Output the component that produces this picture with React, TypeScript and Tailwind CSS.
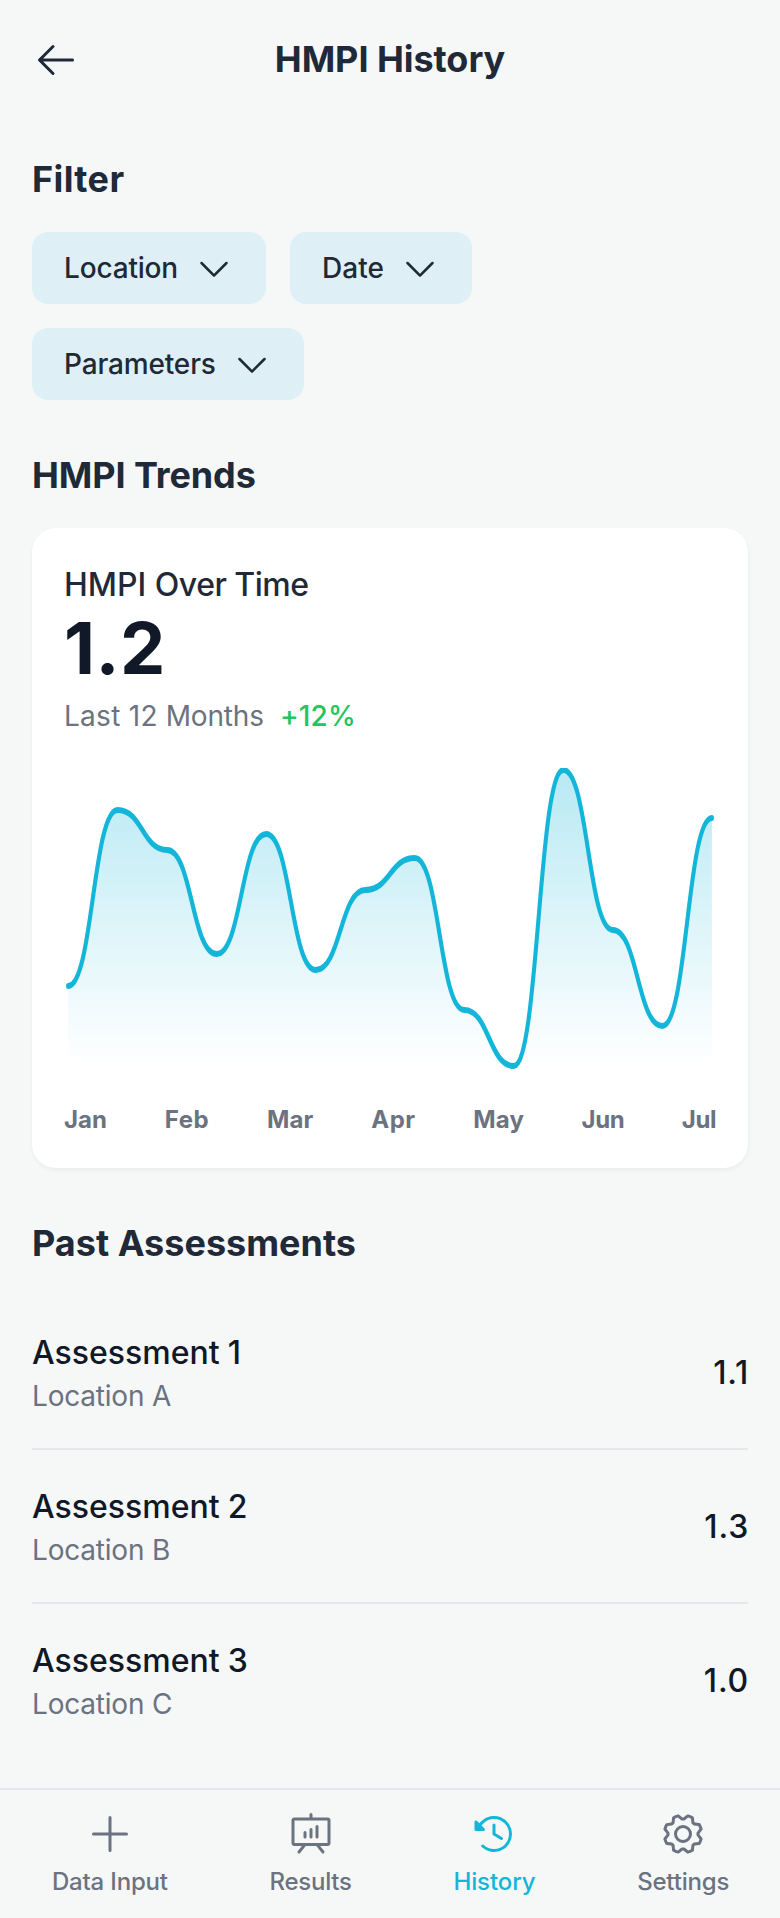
import {
  PiArrowLeft,
  PiCaretDown,
  PiClockCounterClockwiseFill,
  PiGear,
  PiPlus,
  PiPresentationChart,
} from "react-icons/pi";

const filters = [
  { name: "Location", tracking: "tracking-[-0.175px]" },
  { name: "Date", tracking: "tracking-[0.05px]" },
  { name: "Parameters", tracking: "tracking-[-0.15px]" },
];
const months = [
  { name: "Jan", tracking: "tracking-[0.06px]" },
  { name: "Feb", tracking: "tracking-[0.6px]" },
  { name: "Mar", tracking: "tracking-[0.2px]" },
  { name: "Apr", tracking: "tracking-[0.6px]" },
  { name: "May", tracking: "tracking-[0.1px]" },
  { name: "Jun", tracking: "tracking-[-0.4px]" },
  { name: "Jul", tracking: "tracking-[-0.45px]" },
];
const assessments = [
  { name: "Assessment 1", location: "Location A", value: "1.1" },
  { name: "Assessment 2", location: "Location B", value: "1.3" },
  { name: "Assessment 3", location: "Location C", value: "1.0" },
];
const tabs = [
  { label: "Data Input", Icon: PiPlus, style: "tracking-[-0.17px] text-[#6b7280]" },
  { label: "Results", Icon: PiPresentationChart, style: "tracking-[-0.28px] text-[#6b7280]" },
  { label: "History", Icon: PiClockCounterClockwiseFill, style: "tracking-[-0.1px] text-[#13b6d9]" },
  { label: "Settings", Icon: PiGear, style: "tracking-[-0.2px] text-[#6b7280]" },
];

const curve =
  "M0 109C18.1538 109 18.1538 21 36.3077 21C54.4615 21 54.4615 41 72.6154 41C90.7692 41 90.7692 93 108.923 93C127.077 93 127.077 33 145.231 33C163.385 33 163.385 101 181.538 101C199.692 101 199.692 61 217.846 61C236 61 236 45 254.154 45C272.308 45 272.308 121 290.462 121C308.615 121 308.615 149 326.769 149C344.923 149 344.923 1 363.077 1C381.231 1 381.231 81 399.385 81C417.538 81 417.538 129 435.692 129C453.846 129 453.846 25 472 25";

function SectionTitle({ children, className }: { children: string; className: string }) {
  return (
    <h2 className={`mb-6 pb-0.5 text-[36px] leading-[54px] font-bold ${className}`}>{children}</h2>
  );
}

function TrendChart() {
  return (
    <svg
      className="mt-8 block h-[304px] w-full"
      viewBox="-3 0 478 152"
      preserveAspectRatio="none"
      fill="none"
    >
      <defs>
        <linearGradient id="area" x1="236" y1="1" x2="236" y2="149" gradientUnits="userSpaceOnUse">
          <stop stopColor="#13b6d9" stopOpacity="0.3" />
          <stop offset="1" stopColor="#13b6d9" stopOpacity="0" />
        </linearGradient>
      </defs>
      <path d={`${curve}V149H0V109Z`} fill="url(#area)" />
      <path d={curve} stroke="#13b6d9" strokeWidth="3" strokeLinecap="round" />
    </svg>
  );
}

export default function App() {
  return (
    <div className="flex min-h-[1918px] w-full flex-col bg-[#f6f8f8] font-['Inter',sans-serif] text-[#1f2937]">
      <header className="flex items-center justify-between p-8">
        <PiArrowLeft className="size-12" />
        <h1 className="pb-0.5 text-[36px] leading-[54px] font-bold tracking-[-0.05px]">HMPI History</h1>
        <div className="size-12" />
      </header>

      <main className="flex flex-1 flex-col gap-12 p-8">
        <section>
          <SectionTitle className="tracking-[0.4px]">Filter</SectionTitle>
          <div className="flex w-[600px] flex-wrap gap-6">
            {filters.map(({ name, tracking }) => (
              <button
                key={name}
                className={`flex h-18 items-center gap-4 rounded-2xl bg-[#def0f5] px-8 text-[28px] leading-10 font-medium ${tracking}`}
              >
                {name}
                <PiCaretDown className="size-10" />
              </button>
            ))}
          </div>
        </section>

        <section>
          <SectionTitle className="tracking-[-0.1px]">HMPI Trends</SectionTitle>
          <div className="rounded-3xl bg-white p-8 shadow-[0_2px_4px_0_rgba(0,0,0,0.05)]">
            <p className="-mb-0.5 text-[32px] leading-[50px] font-medium">
              HMPI <span className="tracking-[-0.5px]">Over Time</span>
            </p>
            <p className="text-[72px] leading-20 font-bold tracking-[0.5px] text-[#111827]">1.2</p>
            <div className="mt-2 flex gap-4 text-[28px] leading-10">
              <span className="text-[#6b7280]">
                <span className="tracking-[0.28px]">Last 12</span>{" "}
                <span className="tracking-[-0.15px]">Months</span>
              </span>
              <span className="font-medium tracking-[0.15px] text-[#22c55e]">+12%</span>
            </div>
            <TrendChart />
            <div className="mt-8 flex justify-between text-2xl font-bold text-[#6b7280]">
              {months.map(({ name, tracking }) => (
                <span key={name} className={tracking}>
                  {name}
                </span>
              ))}
            </div>
          </div>
        </section>

        <section>
          <SectionTitle className="tracking-normal">Past Assessments</SectionTitle>
          <ul className="divide-y-2 divide-[#e5e7eb]">
            {assessments.map((item) => (
              <li key={item.name} className="flex items-center justify-between py-8">
                <div>
                  <p className="-mb-0.5 text-[32px] leading-[50px] font-medium text-[#111827] [word-spacing:-0.5px]">
                    {item.name}
                  </p>
                  <p className="text-[28px] leading-10 tracking-[-0.2px] text-[#6b7280]">{item.location}</p>
                </div>
                <p className="-mr-px pt-0.5 text-[32px] leading-12 font-medium tracking-[0.8px] text-[#111827]">
                  {item.value}
                </p>
              </li>
            ))}
          </ul>
        </section>
      </main>

      <nav className="flex justify-around border-t-2 border-[#e5e7eb] py-5 pl-px">
        {tabs.map(({ label, Icon, style }) => (
          <a key={label} className={`flex flex-col items-center gap-2 text-2xl font-medium ${style}`}>
            <Icon className="size-12" />
            <span>{label}</span>
          </a>
        ))}
      </nav>
    </div>
  );
}
